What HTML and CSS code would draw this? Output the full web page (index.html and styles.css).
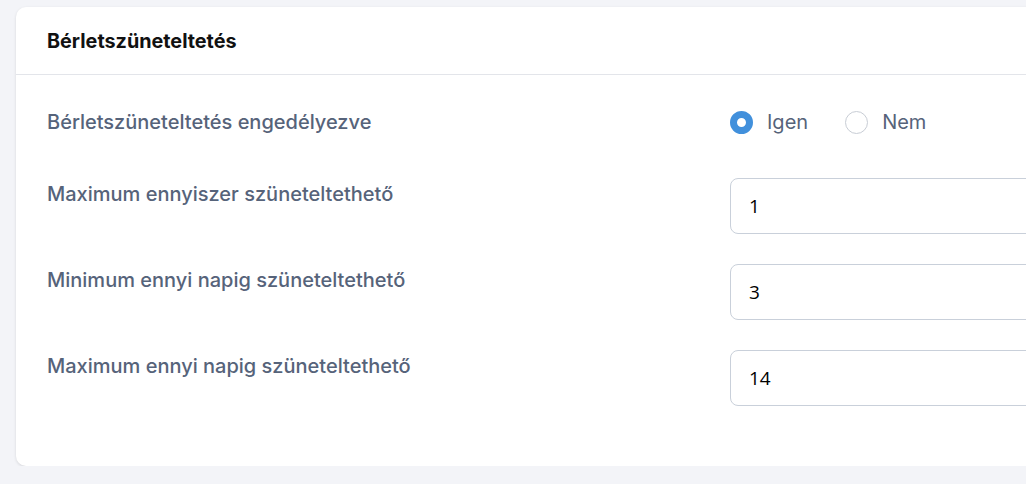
FILE: index.html
```html
<!DOCTYPE html>
<html lang="hu">
<head>
    <meta charset="UTF-8">
    <meta name="viewport" content="width=device-width, initial-scale=1.0">
    <title>Bérletszüneteltetés</title>
    <link rel="stylesheet" href="styles.css">
</head>
<body>
    <div class="page">
        <div class="card">
            <div class="card-header">Bérletszüneteltetés</div>
            <div class="card-body">
                <div class="form-row form-row-radio">
                    <label class="form-label">Bérletszüneteltetés engedélyezve</label>
                    <div class="radio-group">
                        <label class="radio-option">
                            <input type="radio" name="pause_enabled" value="1" checked>
                            <span>Igen</span>
                        </label>
                        <label class="radio-option">
                            <input type="radio" name="pause_enabled" value="0">
                            <span>Nem</span>
                        </label>
                    </div>
                </div>
                <div class="form-row">
                    <label class="form-label" for="maxCount">Maximum ennyiszer szüneteltethető</label>
                    <input class="form-input" id="maxCount" type="text" value="1">
                </div>
                <div class="form-row">
                    <label class="form-label" for="minDays">Minimum ennyi napig szüneteltethető</label>
                    <input class="form-input" id="minDays" type="text" value="3">
                </div>
                <div class="form-row">
                    <label class="form-label" for="maxDays">Maximum ennyi napig szüneteltethető</label>
                    <input class="form-input" id="maxDays" type="text" value="14">
                </div>
            </div>
        </div>
    </div>
</body>
</html>
```

FILE: styles.css
```css
html, body {
    margin: 0;
    padding: 0;
    background-color: #f3f4f8;
    overflow: hidden;
}
.page {
    padding: 7px 0 0 16px;
    width: 1200px;
    font-family: Inter, "Noto Sans", sans-serif;
}
.card {
    background-color: #fff;
    border-radius: 10px;
    box-shadow: 0 1px 3px rgba(0, 0, 0, 0.12);
    width: 1150px;
}
.card-header {
    height: 68px;
    box-sizing: border-box;
    padding: 0 31px;
    display: flex;
    align-items: center;
    font-size: 19.8px;
    font-weight: 700;
    color: #111;
    border-bottom: 1px solid #e3e5ea;
}
.card-body {
    padding: 35px 0 60px 31px;
    display: flex;
    flex-direction: column;
    gap: 30px;
}
.form-row {
    display: grid;
    grid-template-columns: 683px 1fr;
    align-items: start;
}
.form-row-radio {
    margin-bottom: 14px;
    align-items: center;
}
.form-label {
    font-size: 20px;
    font-weight: 500;
    line-height: 24px;
    color: #56637a;
    padding-top: 4px;
}
.form-row-radio .form-label {
    padding-top: 0;
}
.radio-group {
    display: flex;
    gap: 37px;
    height: 24px;
    align-items: center;
}
.radio-option {
    display: flex;
    align-items: center;
    gap: 14px;
    font-size: 20px;
    color: #56637a;
    cursor: pointer;
}
.radio-option input {
    appearance: none;
    -webkit-appearance: none;
    margin: 0;
    width: 23px;
    height: 23px;
    border-radius: 50%;
    border: 1px solid #c8cdd5;
    background-color: #fff;
    box-sizing: border-box;
}
.radio-option input:checked {
    border: 7.5px solid #4190dc;
}
.form-input {
    height: 56px;
    box-sizing: border-box;
    width: 400px;
    border: 1px solid #c9d0da;
    border-radius: 8px;
    padding: 0 18px;
    font-family: "Open Sans", sans-serif;
    font-size: 19px;
    color: #000;
    outline: none;
}
```
